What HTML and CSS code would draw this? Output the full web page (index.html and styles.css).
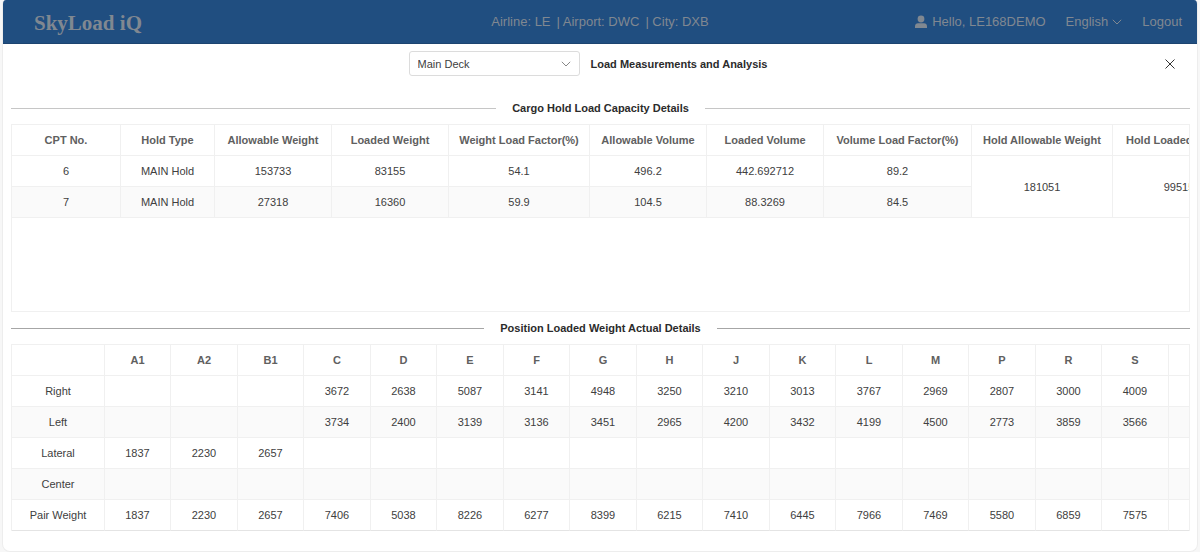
FILE: index.html
```html
<!DOCTYPE html>
<html lang="en">
<head>
<meta charset="utf-8">
<title>SkyLoad iQ</title>
<link rel="stylesheet" href="styles.css">
</head>
<body>
<div class="app">
  <header class="topbar">
    <div class="brand">SkyLoad iQ</div>
    <div class="context"><span>Airline: LE</span><span>| Airport: DWC</span><span>| City: DXB</span></div>
    <nav class="account">
      <span class="user">
        <svg class="user-icon" viewBox="0 0 12 14" aria-hidden="true"><circle cx="6" cy="4" r="3.400"/><path d="M0 13v-1.500C0 9.300 1.300 8.300 3 8.300h6c1.700 0 3 1 3 3.200V13z"/></svg>
        Hello, LE168DEMO
      </span>
      <button class="link language" type="button">English
        <svg class="chevron" viewBox="0 0 10 6" aria-hidden="true"><path d="M.8.8 5 5 9.200.8"/></svg>
      </button>
      <a class="link" href="#">Logout</a>
    </nav>
  </header>
  <main class="panel">
    <div class="toolbar">
      <div class="toolbar-main">
        <div class="select">
          <select aria-label="Deck"><option>Main Deck</option></select>
          <svg class="chevron select-arrow" viewBox="0 0 10 6" aria-hidden="true"><path d="M.8.8 5 5 9.200.8"/></svg>
        </div>
        <h1 class="title">Load Measurements and Analysis</h1>
      </div>
      <button class="close" type="button" aria-label="Close"><svg viewBox="0 0 10 10" aria-hidden="true"><path d="M.5.5l9 9M9.500.5l-9 9"/></svg></button>
    </div>

    <h2 class="divider">Cargo Hold Load Capacity Details</h2>
    <div class="grid grid-capacity">
      <table class="capacity">
        <colgroup><col class="w109"><col class="w94"><col class="w117"><col class="w117"><col class="w141"><col class="w117"><col class="w117"><col class="w148"><col class="w141"><col class="w133"></colgroup>
        <thead><tr><th>CPT No.</th><th>Hold Type</th><th>Allowable Weight</th><th>Loaded Weight</th><th>Weight Load Factor(%)</th><th>Allowable Volume</th><th>Loaded Volume</th><th>Volume Load Factor(%)</th><th>Hold Allowable Weight</th><th>Hold Loaded Weight</th></tr></thead>
        <tbody>
          <tr><td>6</td><td>MAIN Hold</td><td>153733</td><td>83155</td><td>54.1</td><td>496.2</td><td>442.692712</td><td>89.2</td><td rowspan="2">181051</td><td rowspan="2">99515</td></tr>
          <tr><td>7</td><td>MAIN Hold</td><td>27318</td><td>16360</td><td>59.9</td><td>104.5</td><td>88.3269</td><td>84.5</td></tr>
        </tbody>
      </table>
    </div>

    <h2 class="divider divider-strong">Position Loaded Weight Actual Details</h2>
    <div class="grid">
      <table class="positions">
        <colgroup><col><col><col><col><col><col><col><col><col><col><col><col><col><col><col><col><col><col></colgroup>
        <thead><tr><th></th><th>A1</th><th>A2</th><th>B1</th><th>C</th><th>D</th><th>E</th><th>F</th><th>G</th><th>H</th><th>J</th><th>K</th><th>L</th><th>M</th><th>P</th><th>R</th><th>S</th><th></th></tr></thead>
        <tbody>
          <tr><td>Right</td><td></td><td></td><td></td><td>3672</td><td>2638</td><td>5087</td><td>3141</td><td>4948</td><td>3250</td><td>3210</td><td>3013</td><td>3767</td><td>2969</td><td>2807</td><td>3000</td><td>4009</td><td></td></tr>
          <tr><td>Left</td><td></td><td></td><td></td><td>3734</td><td>2400</td><td>3139</td><td>3136</td><td>3451</td><td>2965</td><td>4200</td><td>3432</td><td>4199</td><td>4500</td><td>2773</td><td>3859</td><td>3566</td><td></td></tr>
          <tr><td>Lateral</td><td>1837</td><td>2230</td><td>2657</td><td></td><td></td><td></td><td></td><td></td><td></td><td></td><td></td><td></td><td></td><td></td><td></td><td></td><td></td></tr>
          <tr><td>Center</td><td></td><td></td><td></td><td></td><td></td><td></td><td></td><td></td><td></td><td></td><td></td><td></td><td></td><td></td><td></td><td></td><td></td></tr>
          <tr><td>Pair Weight</td><td>1837</td><td>2230</td><td>2657</td><td>7406</td><td>5038</td><td>8226</td><td>6277</td><td>8399</td><td>6215</td><td>7410</td><td>6445</td><td>7966</td><td>7469</td><td>5580</td><td>6859</td><td>7575</td><td></td></tr>
        </tbody>
      </table>
    </div>
  </main>
</div>
</body>
</html>
```
FILE: styles.css
```css
* { box-sizing: border-box; }

body {
  margin: 0;
  padding: 0 2px;
  background: #f7f7f7;
  color: #404040;
  font: 11px/16px "Liberation Sans", Arial, sans-serif;
}

.app {
  min-height: 100vh;
  border: 1px solid #ededed;
  border-top: 0;
  border-radius: 4px 4px 8px 8px;
  background: #fff;
  overflow: hidden;
}

.topbar {
  display: grid;
  grid-template-columns: 1fr auto 1fr;
  align-items: center;
  height: 44px;
  padding: 0 15px;
  border-bottom: 1px solid #1c4470;
  background: #204e80;
  color: #808891;
  font-size: 13px;
}

.brand {
  padding: 2px 0 0 16px;
  font: bold 21px/24px "Liberation Serif", "Times New Roman", serif;
}

.context { display: flex; gap: 6px; }

.account {
  display: flex;
  justify-content: flex-end;
  align-items: center;
  gap: 20px;
}

.user { display: flex; align-items: center; gap: 5px; }

.user-icon { width: 12px; height: 14px; fill: currentColor; }

.link {
  padding: 0;
  border: 0;
  background: none;
  color: inherit;
  font: inherit;
  text-decoration: none;
}

.language { display: flex; align-items: center; gap: 4px; }

.chevron {
  width: 10px;
  height: 6px;
  fill: none;
  stroke: currentColor;
}

.panel { padding: 7px 7px 8px 8px; }

.toolbar {
  display: flex;
  align-items: center;
  margin-bottom: 24px;
}

.toolbar-main {
  display: flex;
  flex: 1;
  justify-content: center;
  align-items: center;
  gap: 11px;
}

.select {
  position: relative;
  width: 171px;
}

.select select {
  display: block;
  width: 100%;
  height: 25px;
  padding: 0 8px;
  border: 1px solid #dcdcdc;
  border-radius: 3px;
  background: #fff;
  color: #404040;
  font: inherit;
  appearance: none;
}

.select-arrow {
  position: absolute;
  top: 10px;
  right: 9px;
  color: #888;
  pointer-events: none;
}

.title, .divider {
  margin: 0;
  color: #2b2b2b;
  font-size: 11px;
  font-weight: bold;
}

.close {
  display: flex;
  margin-right: 15px;
  padding: 0;
  border: 0;
  background: none;
  color: #333;
}

.close svg { width: 10px; height: 10px; fill: none; stroke: currentColor; }

.divider {
  display: flex;
  align-items: center;
  gap: 16px;
  margin-bottom: 8px;
}

.divider::before, .divider::after {
  content: "";
  flex: 1;
  border-top: 1px solid #c6c6c6;
}

.divider-strong::before, .divider-strong::after { border-color: #a6a6a6; }

.grid {
  border: 1px solid #f0f0f0;
  border-bottom: 0;
  overflow: hidden;
}

.grid-capacity {
  min-height: 188px;
  margin-bottom: 8px;
  border-bottom: 1px solid #f0f0f0;
}

table { table-layout: fixed; border-spacing: 0; }

.capacity { width: 1234px; }
.positions { width: 1223px; }

th, td {
  height: 31px;
  padding: 0;
  border-right: 1px solid #f0f0f0;
  border-bottom: 1px solid #f0f0f0;
  text-align: center;
  white-space: nowrap;
}

th { color: #606060; }

tbody tr:nth-child(even) td { background: #fafafa; }

.positions tr:last-child td { border-bottom-color: #e4e4e4; }

.positions col:nth-child(even) { width: 66px; }
.positions col:nth-child(odd) { width: 67px; }
.positions col:first-child { width: 93px; }

.w94 { width: 94px; }
.w109 { width: 109px; }
.w117 { width: 117px; }
.w133 { width: 133px; }
.w141 { width: 141px; }
.w148 { width: 148px; }
```
